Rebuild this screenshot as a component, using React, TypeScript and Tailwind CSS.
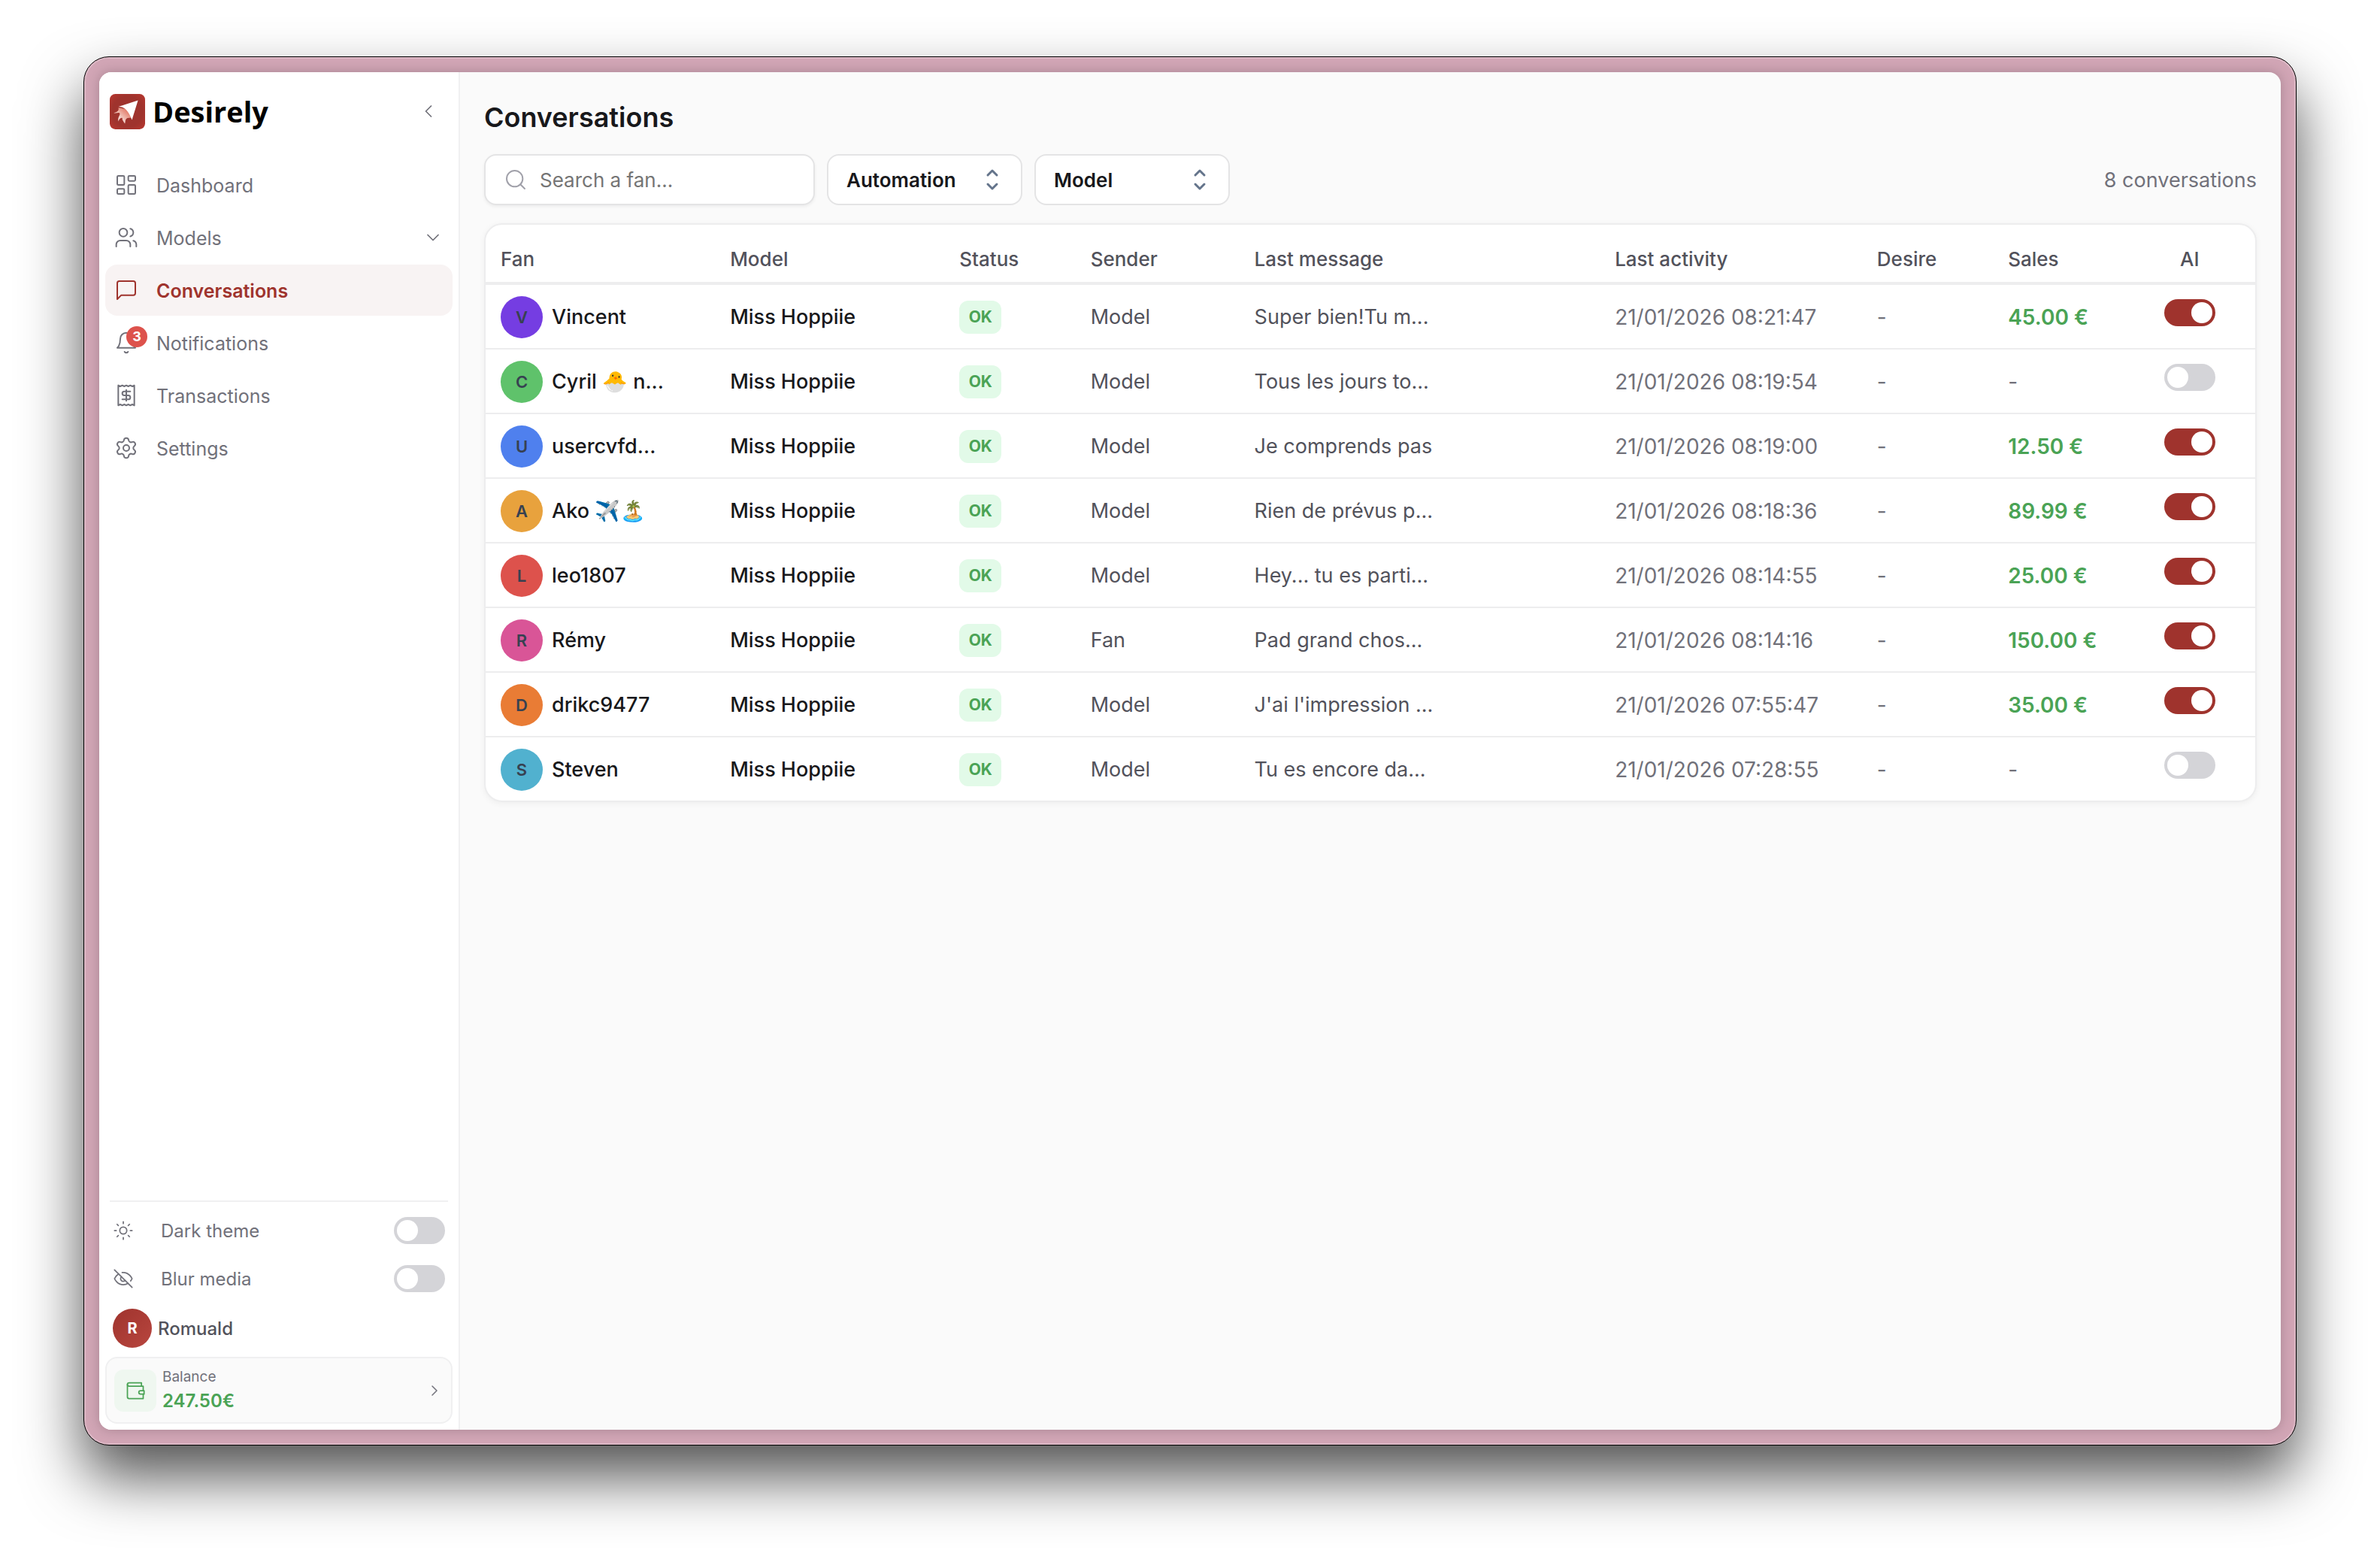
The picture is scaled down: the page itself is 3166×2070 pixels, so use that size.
import { useState } from "react";
import type { ReactNode } from "react";
import { ChevronDown, ChevronLeft, ChevronRight, LayoutDashboard, Search, Settings, Sun, Users } from "lucide-react";

const Icon = ({ size = 32, children }: { size?: number; children: ReactNode }) => (
  <svg
    width={size}
    height={size}
    viewBox="0 0 24 24"
    fill="none"
    stroke="currentColor"
    strokeWidth={1.5}
    strokeLinecap="round"
    strokeLinejoin="round"
    className="shrink-0"
    aria-hidden="true"
  >
    {children}
  </svg>
);

const MessageIcon = () => (
  <Icon>
    <path d="M21 15a2 2 0 0 1-2 2H7l-4 4V5a2 2 0 0 1 2-2h14a2 2 0 0 1 2 2z" />
  </Icon>
);

const BellIcon = () => (
  <Icon>
    <path d="M6 8a6 6 0 0 1 12 0c0 7 3 9 3 9H3s3-2 3-9" />
    <path d="M10.3 21a1.94 1.94 0 0 0 3.4 0" />
  </Icon>
);

const ReceiptIcon = () => (
  <Icon>
    <path d="M4 2v20l2-1 2 1 2-1 2 1 2-1 2 1 2-1 2 1V2l-2 1-2-1-2 1-2-1-2 1-2-1-2 1Z" />
    <path d="M16 8h-6a2 2 0 1 0 0 4h4a2 2 0 1 1 0 4H8" />
    <path d="M12 17.5v-11" />
  </Icon>
);

const EyeOffIcon = () => (
  <Icon size={28}>
    <path d="M9.88 9.88a3 3 0 1 0 4.24 4.24" />
    <path d="M10.73 5.08A10.43 10.43 0 0 1 12 5c7 0 10 7 10 7a13.16 13.16 0 0 1-1.67 2.68" />
    <path d="M6.61 6.61A13.526 13.526 0 0 0 2 12s3 7 10 7a9.74 9.74 0 0 0 5.39-1.61" />
    <path d="m2 2 20 20" />
  </Icon>
);

const WalletIcon = () => (
  <Icon size={28}>
    <path d="M21 12V7H5a2 2 0 0 1 0-4h14v4" />
    <path d="M3 5v14a2 2 0 0 0 2 2h16v-5" />
    <path d="M18 12a2 2 0 0 0 0 4h4v-4Z" />
  </Icon>
);

const Logo = () => (
  <svg width="47" height="47" viewBox="0 0 140 140" className="shrink-0" aria-hidden="true">
    <defs>
      <radialGradient id="logo-bg" cx="50%" cy="50%" r="72%">
        <stop offset="0.6" stopColor="#9f332d" />
        <stop offset="1" stopColor="#bb372f" />
      </radialGradient>
      <linearGradient id="logo-flame" x1="0.9" y1="0.2" x2="0.2" y2="0.9">
        <stop offset="0" stopColor="#e0705c" />
        <stop offset="0.5" stopColor="#eeb5a9" />
        <stop offset="1" stopColor="#ffffff" />
      </linearGradient>
    </defs>
    <rect width="140" height="140" rx="22" fill="url(#logo-bg)" />
    <path
      d="M34 54C38 64 30 72 16 75C25 78 34 72 39 76C44 83 29 92 35 109C36 100 43 92 50 95C48 103 55 108 60 118C63 108 60 100 70 95L86 94L74 62Z"
      fill="url(#logo-flame)"
    />
    <path d="M112 25L34 51C54 50 72 60 88 103Z" fill="#fff" />
  </svg>
);

interface SwitchProps {
  label: string;
  defaultOn?: boolean;
}

const Switch = ({ label, defaultOn = false }: SwitchProps) => {
  const [on, setOn] = useState(defaultOn);

  return (
    <input
      type="checkbox"
      role="switch"
      aria-label={label}
      checked={on}
      onChange={() => setOn(!on)}
      className="block h-9 w-17 shrink-0 cursor-pointer appearance-none rounded-full bg-[#d4d4d8] p-1 transition-colors before:block before:size-7 before:rounded-full before:bg-white before:transition-transform before:content-[''] checked:bg-[#9f332d] checked:before:translate-x-8"
    />
  );
};

const Select = ({ label, options }: { label: string; options: string[] }) => (
  <div className="relative w-[260px]">
    <select
      aria-label={label}
      className="h-17 w-full appearance-none rounded-2xl border-2 border-[#e4e4e5] bg-white pr-16 pl-6 text-[26px] font-semibold text-[#18181b]"
    >
      {options.map((option) => (
        <option key={option}>{option}</option>
      ))}
    </select>
    <svg
      width="40"
      height="40"
      viewBox="0 0 20 20"
      fill="none"
      stroke="#64748b"
      strokeWidth="1.5"
      strokeLinecap="round"
      strokeLinejoin="round"
      className="pointer-events-none absolute top-3.5 right-5"
      aria-hidden="true"
    >
      <path d="M7 7l3-3 3 3m0 6l-3 3-3-3" />
    </svg>
  </div>
);

const navItems = [
  { label: "Dashboard", icon: <LayoutDashboard size={32} strokeWidth={1.5} /> },
  { label: "Models", icon: <Users size={32} strokeWidth={1.5} />, expandable: true },
  { label: "Conversations", icon: <MessageIcon />, active: true },
  { label: "Notifications", icon: <BellIcon />, badge: 3 },
  { label: "Transactions", icon: <ReceiptIcon /> },
  { label: "Settings", icon: <Settings size={32} strokeWidth={1.5} /> },
];

const conversations = [
  { fan: "Vincent", initial: "V", color: "bg-[#753de2]", sender: "Model", message: "Super bien!Tu m...", activity: "21/01/2026 08:21:47", sales: "45.00 €", ai: true },
  { fan: "Cyril 🐣 n...", initial: "C", color: "bg-[#5fc26b]", sender: "Model", message: "Tous les jours to...", activity: "21/01/2026 08:19:54", sales: "-", ai: false },
  { fan: "usercvfd...", initial: "U", color: "bg-[#4f80ee]", sender: "Model", message: "Je comprends pas", activity: "21/01/2026 08:19:00", sales: "12.50 €", ai: true },
  { fan: "Ako ✈️🏝️", initial: "A", color: "bg-[#e8a23d]", sender: "Model", message: "Rien de prévus p...", activity: "21/01/2026 08:18:36", sales: "89.99 €", ai: true },
  { fan: "leo1807", initial: "L", color: "bg-[#dd524c]", sender: "Model", message: "Hey... tu es parti...", activity: "21/01/2026 08:14:55", sales: "25.00 €", ai: true },
  { fan: "Rémy", initial: "R", color: "bg-[#d95597]", sender: "Fan", message: "Pad grand chos...", activity: "21/01/2026 08:14:16", sales: "150.00 €", ai: true },
  { fan: "drikc9477", initial: "D", color: "bg-[#e97c35]", sender: "Model", message: "J'ai l'impression ...", activity: "21/01/2026 07:55:47", sales: "35.00 €", ai: true },
  { fan: "Steven", initial: "S", color: "bg-[#51b1cf]", sender: "Model", message: "Tu es encore da...", activity: "21/01/2026 07:28:55", sales: "-", ai: false },
];

const columns = [
  { label: "Fan", width: "w-[14%]" },
  { label: "Model", width: "w-[14%]" },
  { label: "Status", width: "w-[8%]" },
  { label: "Sender", width: "w-[10%]" },
  { label: "Last message", width: "w-[22%]" },
  { label: "Last activity", width: "w-[16%]" },
  { label: "Desire", width: "w-[8%]" },
  { label: "Sales", width: "w-[8%]" },
  { label: "AI", width: "w-[8%]" },
];

const Sidebar = () => (
  <aside className="flex w-[480px] shrink-0 flex-col border-r-2 border-[#f0f0f1] bg-white text-[#71717a]">
    <div className="flex h-[104px] items-center justify-between pr-[26px] pl-3.5">
      <a href="#" className="flex items-center gap-2.5">
        <Logo />
        <span className="font-['Open_Sans',sans-serif] text-[38px] font-bold text-black">Desirely</span>
      </a>
      <button type="button" aria-label="Collapse sidebar">
        <ChevronLeft size={28} strokeWidth={1.5} />
      </button>
    </div>

    <nav className="mt-3 flex flex-col gap-0.5 px-2">
      {navItems.map((item) => (
        <a
          key={item.label}
          href="#"
          className={`flex h-17 items-center gap-6 rounded-2xl px-3 text-[25px] ${
            item.active ? "bg-[#f8f3f3] font-semibold text-[#9f332d]" : ""
          }`}
        >
          <span className="relative">
            {item.icon}
            {item.badge && (
              <span className="absolute -top-1.5 left-4 flex size-7 items-center justify-center rounded-full bg-[#dd524c] text-lg font-bold text-white">
                {item.badge}
              </span>
            )}
          </span>
          <span className="flex-1 pt-1">{item.label}</span>
          {item.expandable && <ChevronDown size={28} strokeWidth={1.5} />}
        </a>
      ))}
    </nav>

    <div className="mt-auto flex flex-col px-2 pb-2 text-2xl">
      <div className="mx-1.5 border-t-2 border-[#f0f0f1]" />
      <div className="mt-1.5 flex h-16 items-center gap-9 px-2.5">
        <Sun size={28} strokeWidth={1.5} />
        <span className="flex-1 pt-0.5">Dark theme</span>
        <Switch label="Dark theme" />
      </div>
      <div className="flex h-16 items-center gap-9 px-2.5">
        <EyeOffIcon />
        <span className="flex-1 pt-0.5">Blur media</span>
        <Switch label="Blur media" />
      </div>
      <div className="mt-2 flex items-center gap-2 px-2.5">
        <div className="flex size-13 items-center justify-center rounded-full bg-linear-to-br from-[#9f332d] to-[#b8463f] text-xl font-bold text-white">
          R
        </div>
        <span className="pt-0.5 font-medium text-[#52525b]">Romuald</span>
      </div>
      <a
        href="#"
        className="mt-3 flex h-[89px] items-center gap-2 rounded-2xl border-2 border-[#f0f0f1] bg-[#fafafa] px-2.5"
      >
        <span className="flex size-14 items-center justify-center rounded-xl bg-[#eff7f0] text-[#4aa355]">
          <WalletIcon />
        </span>
        <span className="flex flex-1 flex-col">
          <span className="text-[19px] leading-7">Balance</span>
          <span className="leading-9 font-semibold text-[#4aa355]">247.50€</span>
        </span>
        <ChevronRight size={24} strokeWidth={1.5} />
      </a>
    </div>
  </aside>
);

const ConversationsTable = () => (
  <div className="mt-6 overflow-hidden rounded-3xl border-2 border-[#ededee] bg-white shadow-[0_2px_8px_rgba(0,0,0,0.05)]">
    <table className="w-full table-fixed border-separate border-spacing-0 text-left">
      <thead>
        <tr>
          {columns.map((column) => (
            <th
              key={column.label}
              className={`h-20 border-b-4 border-[#ededee] px-5 pt-3.5 text-[26px] font-medium text-[#52525b] last:text-center ${column.width}`}
            >
              {column.label}
            </th>
          ))}
        </tr>
      </thead>
      <tbody className="text-[27px] text-[#71717a] [&_td]:h-[86px] [&_td]:border-b-2 [&_td]:border-[#ededee] [&_td]:px-5 [&_td]:pt-0.5 [&_td]:whitespace-nowrap [&_tr:last-child_td]:border-b-0 [&_tr:last-child_td]:h-[84px]">
        {conversations.map((row) => (
          <tr key={row.fan}>
            <td>
              <div className="flex items-center gap-3 font-medium text-[#18181b]">
                <span
                  className={`flex size-14 shrink-0 items-center justify-center rounded-full text-[22px] font-semibold text-[#374151] ${row.color}`}
                >
                  {row.initial}
                </span>
                {row.fan}
              </div>
            </td>
            <td>
              <span className="font-medium text-[#18181b]">Miss Hoppiie</span>
            </td>
            <td>
              <span className="flex h-11 w-14 items-center justify-center rounded-xl bg-[#e2fae8] text-[21px] font-bold text-[#4aa355]">
                OK
              </span>
            </td>
            <td className="text-[#52525b]">{row.sender}</td>
            <td className="text-[#52525b]">{row.message}</td>
            <td className="text-[28px]">{row.activity}</td>
            <td className="text-[28px]">-</td>
            <td className={row.sales === "-" ? "text-[28px]" : "text-[28px] font-semibold text-[#4aa355]"}>{row.sales}</td>
            <td>
              <div className="flex justify-center pb-3">
                <Switch label={`AI for ${row.fan}`} defaultOn={row.ai} />
              </div>
            </td>
          </tr>
        ))}
      </tbody>
    </table>
  </div>
);

const App = () => {
  const [query, setQuery] = useState("");

  return (
    <div className="flex min-h-screen bg-white px-[111px] pt-[75px] pb-[147px] font-['Inter',sans-serif]">
      <div className="flex flex-1 rounded-[34px] border border-black bg-[#d1a5b5] p-5 shadow-[inset_0_0_0_2px_#dcb8c5,0_42px_80px_rgba(0,0,0,0.68)]">
        <div className="flex flex-1 overflow-hidden rounded-2xl bg-[#fafafa] shadow-[0_0_16px_rgba(0,0,0,0.2)]">
          <Sidebar />
          <main className="min-w-0 flex-1 p-8">
            <h1 className="mb-[21px] text-4xl leading-14 font-semibold text-[#18181b]">Conversations</h1>
            <div className="flex items-center gap-4">
              <label className="flex h-17 w-[440px] items-center gap-4 rounded-2xl border-2 border-[#e4e4e5] bg-white px-6 shadow-[0_2px_4px_rgba(0,0,0,0.06)]">
                <Search size={32} strokeWidth={1.5} className="shrink-0 text-[#a1a1aa]" />
                <input
                  type="text"
                  aria-label="Search a fan"
                  placeholder="Search a fan..."
                  value={query}
                  onChange={(e) => setQuery(e.target.value)}
                  className="w-full text-[26px] outline-none placeholder:text-[#757575]"
                />
              </label>
              <Select label="Automation" options={["Automation", "Enabled", "Disabled"]} />
              <Select label="Model" options={["Model", "Miss Hoppiie"]} />
              <span className="ml-auto pt-0.5 text-[27px] text-[#71717a]">8 conversations</span>
            </div>
            <ConversationsTable />
          </main>
        </div>
      </div>
    </div>
  );
};

export default App;
